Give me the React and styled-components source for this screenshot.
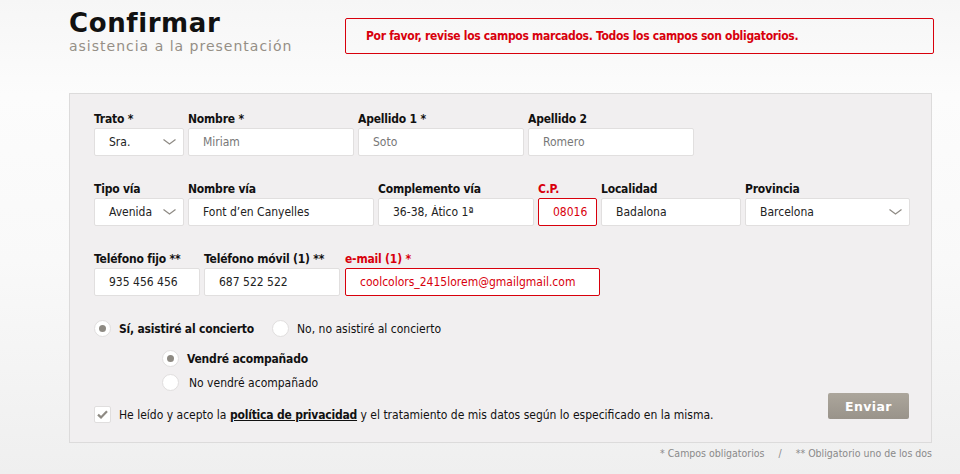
import React from 'react';
import styled, { createGlobalStyle } from 'styled-components';

const GlobalStyle = createGlobalStyle`
  html, body {
    margin: 0;
    padding: 0;
  }
  body {
    width: 960px;
    height: 474px;
    overflow: hidden;
    background: linear-gradient(180deg, #f6f6f6 0%, #fcfcfc 20%, #f9f9f9 55%, #efefef 100%);
    font-family: "DejaVu Sans Condensed", "Liberation Sans", sans-serif;
    color: #111;
  }
`;

const Chevron = () => (
  <svg width="13" height="6" viewBox="0 0 13 6" fill="none">
    <path d="M0.5 0.6 L6.5 5 L12.5 0.6" stroke="#8f8b85" strokeWidth="1.3" />
  </svg>
);

const Check = () => (
  <svg width="11" height="9" viewBox="0 0 11 9" fill="none">
    <path d="M1 4.6 L4 7.4 L10 1.2" stroke="#8e8a83" strokeWidth="2.2" />
  </svg>
);

const App = () => {
  return (
    <Pagina>
      <GlobalStyle />
      <Cabecera>
        <BloqueTitulo>
          <Titulo>Confirmar</Titulo>
          <Subtitulo>asistencia a la presentación</Subtitulo>
        </BloqueTitulo>
        <CajaError>Por favor, revise los campos marcados. Todos los campos son obligatorios.</CajaError>
      </Cabecera>

      <Panel>
        <Fila>
          <Campo w={90}>
            <Etiqueta>Trato *</Etiqueta>
            <Selector><span>Sra.</span><Chevron /></Selector>
          </Campo>
          <Campo w={166}>
            <Etiqueta>Nombre *</Etiqueta>
            <Entrada placeholder="Miriam" readOnly />
          </Campo>
          <Campo w={166}>
            <Etiqueta>Apellido 1 *</Etiqueta>
            <Entrada placeholder="Soto" readOnly />
          </Campo>
          <Campo w={166}>
            <Etiqueta>Apellido 2</Etiqueta>
            <Entrada placeholder="Romero" readOnly />
          </Campo>
        </Fila>

        <Fila>
          <Campo w={90}>
            <Etiqueta>Tipo vía</Etiqueta>
            <Selector><span>Avenida</span><Chevron /></Selector>
          </Campo>
          <Campo w={186}>
            <Etiqueta>Nombre vía</Etiqueta>
            <Entrada value="Font d’en Canyelles" readOnly />
          </Campo>
          <Campo w={156}>
            <Etiqueta>Complemento vía</Etiqueta>
            <Entrada value="36-38, Ático 1ª" readOnly />
          </Campo>
          <Campo w={59}>
            <Etiqueta error>C.P.</Etiqueta>
            <Entrada error value="08016" readOnly />
          </Campo>
          <Campo w={140}>
            <Etiqueta>Localidad</Etiqueta>
            <Entrada value="Badalona" readOnly />
          </Campo>
          <Campo w={165}>
            <Etiqueta>Provincia</Etiqueta>
            <Selector><span>Barcelona</span><Chevron /></Selector>
          </Campo>
        </Fila>

        <Fila arriba={1}>
          <Campo w={106}>
            <Etiqueta>Teléfono fijo **</Etiqueta>
            <Entrada value="935 456 456" readOnly />
          </Campo>
          <Campo w={136}>
            <Etiqueta>Teléfono móvil (1) **</Etiqueta>
            <Entrada value="687 522 522" readOnly />
          </Campo>
          <Campo w={255} sep={1}>
            <Etiqueta error>e-mail (1) *</Etiqueta>
            <Entrada error value="coolcolors_2415lorem@gmailgmail.com" readOnly />
          </Campo>
        </Fila>

        <GrupoRadios>
          <Opcion>
            <Radio marcado />
            <TextoOpcion negrita>Sí, asistiré al concierto</TextoOpcion>
          </Opcion>
          <Opcion>
            <Radio />
            <TextoOpcion>No, no asistiré al concierto</TextoOpcion>
          </Opcion>
        </GrupoRadios>

        <SubRadios>
          <Opcion>
            <Radio marcado />
            <TextoOpcion negrita>Vendré acompañado</TextoOpcion>
          </Opcion>
          <Opcion>
            <Radio />
            <TextoOpcion extra={2}>No vendré acompañado</TextoOpcion>
          </Opcion>
        </SubRadios>

        <FilaFinal>
          <Aceptacion>
            <Casilla><Check /></Casilla>
            <TextoOpcion>
              He leído y acepto la <Enlace>política de privacidad</Enlace> y el tratamiento de mis datos según lo especificado en la misma.
            </TextoOpcion>
          </Aceptacion>
          <BotonEnviar type="button">Enviar</BotonEnviar>
        </FilaFinal>
      </Panel>

      <Notas>
        <span>* Campos obligatorios</span>
        <span>/</span>
        <span>** Obligatorio uno de los dos</span>
      </Notas>
    </Pagina>
  );
};
export default App;

const Pagina = styled.div`
  width: 960px;
  box-sizing: border-box;
  padding: 0 26px 0 69px;
`;

const Cabecera = styled.div`
  display: flex;
  justify-content: space-between;
  align-items: flex-start;
  height: 54px;
`;

const BloqueTitulo = styled.div`
  display: flex;
  flex-direction: column;
  padding-top: 8px;
`;

const Titulo = styled.h1`
  margin: 0;
  font-family: "DejaVu Sans", sans-serif;
  font-weight: bold;
  font-size: 26px;
  line-height: 30px;
  letter-spacing: 0.6px;
  color: #111;
`;

const Subtitulo = styled.div`
  font-family: "DejaVu Sans", sans-serif;
  font-size: 14px;
  line-height: 16px;
  letter-spacing: 1px;
  color: #958f86;
`;

const CajaError = styled.div`
  margin-top: 18px;
  width: 589px;
  height: 36px;
  box-sizing: border-box;
  border: 1px solid #d8000c;
  border-radius: 2px;
  padding-left: 20px;
  display: flex;
  align-items: center;
  font-weight: bold;
  font-size: 12px;
  letter-spacing: -0.3px;
  color: #d8000c;
`;

const Panel = styled.div`
  margin-top: 39px;
  width: 863px;
  height: 350px;
  box-sizing: border-box;
  background: #f1eff0;
  border: 1px solid #dcdbdb;
  padding: 16px 22px 0 24px;
`;

const Fila = styled.div`
  display: flex;
  gap: 4px;
  margin-top: ${p => p.arriba || 0}px;
  margin-bottom: 24px;
  &:last-of-type {
    margin-bottom: 0;
  }
`;

const Campo = styled.div`
  display: flex;
  flex-direction: column;
  flex-shrink: 0;
  width: ${p => p.w}px;
  margin-left: ${p => p.sep || 0}px;
`;

const Etiqueta = styled.label`
  font-weight: bold;
  font-size: 12px;
  letter-spacing: -0.2px;
  line-height: 18px;
  color: ${p => (p.error ? '#d8000c' : '#111')};
`;

const Entrada = styled.input`
  width: 100%;
  height: 28px;
  box-sizing: border-box;
  margin: 0;
  border: 1px solid ${p => (p.error ? '#d8000c' : '#e1dfdf')};
  border-radius: 2px;
  background: #fff;
  padding: 0 0 0 14px;
  font-family: inherit;
  font-size: 12px;
  color: ${p => (p.error ? '#d8000c' : '#222')};
  outline: none;
  &::placeholder {
    color: #777;
  }
`;

const Selector = styled.div`
  height: 28px;
  box-sizing: border-box;
  border: 1px solid #e1dfdf;
  border-radius: 2px;
  background: #fff;
  padding: 0 7px 0 14px;
  display: flex;
  align-items: center;
  justify-content: space-between;
  font-size: 12px;
  color: #222;
`;

const GrupoRadios = styled.div`
  display: flex;
  align-items: center;
  gap: 18px;
  margin-top: 21px;
`;

const SubRadios = styled.div`
  display: flex;
  flex-direction: column;
  gap: 7px;
  margin: 13px 0 0 68px;
`;

const Opcion = styled.div`
  display: flex;
  align-items: center;
  gap: 8px;
  height: 17px;
`;

const Aceptacion = styled(Opcion)`
  margin-top: 13px;
`;

const Radio = styled.span`
  width: 17px;
  height: 17px;
  box-sizing: border-box;
  border-radius: 50%;
  border: 1px solid #e0dede;
  background: #fff;
  display: flex;
  align-items: center;
  justify-content: center;
  flex-shrink: 0;
  &::after {
    content: '';
    width: 7px;
    height: 7px;
    border-radius: 50%;
    background: ${p => (p.marcado ? '#8e8a83' : 'transparent')};
  }
`;

const TextoOpcion = styled.span`
  font-size: 12px;
  font-weight: ${p => (p.negrita ? 'bold' : 'normal')};
  letter-spacing: ${p => (p.negrita ? '-0.2px' : '0')};
  color: #111;
  margin-left: ${p => p.extra || 0}px;
  white-space: nowrap;
`;

const Enlace = styled.a`
  font-weight: bold;
  letter-spacing: -0.2px;
  color: #111;
  text-decoration: underline;
`;

const FilaFinal = styled.div`
  display: flex;
  justify-content: space-between;
  align-items: flex-start;
  margin-top: 2px;
`;

const Casilla = styled.span`
  width: 17px;
  height: 17px;
  box-sizing: border-box;
  border: 1px solid #e0dede;
  border-radius: 2px;
  background: #fff;
  display: flex;
  align-items: center;
  justify-content: center;
  flex-shrink: 0;
`;

const BotonEnviar = styled.button`
  width: 81px;
  height: 26px;
  border: none;
  border-radius: 2px;
  background: linear-gradient(180deg, #aca69c 0%, #99938a 100%);
  color: #fff;
  font-family: "DejaVu Sans", sans-serif;
  font-weight: bold;
  font-size: 12.5px;
  letter-spacing: 0.4px;
  cursor: pointer;
`;

const Notas = styled.div`
  width: 863px;
  display: flex;
  justify-content: flex-end;
  gap: 14px;
  margin-top: 3px;
  font-size: 10.5px;
  line-height: 14px;
  color: #8a8a8a;
`;
